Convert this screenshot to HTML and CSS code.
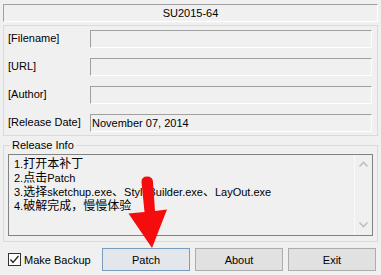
FILE: index.html
```html
<!DOCTYPE html>
<html>
<head>
<meta charset="utf-8">
<link rel="stylesheet" href="styles.css">
</head>
<body>
<div class="app">
  <div class="title">SU2015-64</div>
  <div class="group">
    <div class="row"><span class="lbl">[Filename]</span><div class="edit"></div></div>
    <div class="row"><span class="lbl">[URL]</span><div class="edit"></div></div>
    <div class="row"><span class="lbl">[Author]</span><div class="edit"></div></div>
    <div class="row"><span class="lbl">[Release Date]</span><div class="edit">November 07, 2014</div></div>
  </div>
  <fieldset class="release">
    <legend>Release Info</legend>
    <div class="memo">
      <div class="memo-text">
        <div class="line">1.<span class="cjk">打开本补丁</span></div>
        <div class="line">2.<span class="cjk">点击</span>Patch</div>
        <div class="line">3.<span class="cjk">选择</span>sketchup.exe<span class="cjk">、</span>StyleBuilder.exe<span class="cjk">、</span>LayOut.exe</div>
        <div class="line">4.<span class="cjk">破解完成，慢慢体验</span></div>
      </div>
      <div class="scroll">
        <svg width="17" height="17" viewBox="0 0 17 17"><path d="M4.5 10.5 L8.5 6.5 L12.5 10.5" fill="none" stroke="#bfbfbf" stroke-width="1.6"/></svg>
        <svg width="17" height="17" viewBox="0 0 17 17"><path d="M4.5 6.5 L8.5 10.5 L12.5 6.5" fill="none" stroke="#bfbfbf" stroke-width="1.6"/></svg>
      </div>
    </div>
  </fieldset>
  <div class="bottom">
    <label class="check"><span class="box"><svg width="11" height="11" viewBox="0 0 11 11"><path d="M1.5 5.5 L4 8.5 L9.5 2" fill="none" stroke="#222" stroke-width="1.3"/></svg></span>Make Backup</label>
    <div class="buttons">
      <button class="btn default">Patch</button>
      <button class="btn">About</button>
      <button class="btn">Exit</button>
    </div>
  </div>
  <svg class="arrow" width="381" height="275" viewBox="0 0 381 275">
    <path d="M141.5 182 Q141.5 176.5 147 176.5 Q152.8 176.5 153 182 L155 211 L167 209.5 L152 248 L128.5 213.5 L144.5 212 Z" fill="#f50d0d"/>
  </svg>
</div>
</body>
</html>
```
FILE: styles.css
```css
html, body {
  margin: 0;
  padding: 0;
}
body {
  width: 381px;
  height: 275px;
  overflow: hidden;
  background: #f0f0f0;
  font-family: "Liberation Sans", Arial, sans-serif;
  font-size: 11px;
  color: #000;
}
.app {
  position: relative;
  width: 381px;
  height: 275px;
  padding-top: 4px;
  box-sizing: border-box;
}
.title {
  margin-left: 3px;
  width: 375px;
  height: 18px;
  box-sizing: border-box;
  border-top: 1px solid #a0a0a0;
  border-left: 1px solid #a0a0a0;
  border-bottom: 1px solid #fff;
  border-right: 1px solid #fff;
  text-align: center;
  line-height: 16px;
}
.group {
  margin: 3px 0 0 3px;
  width: 375px;
  box-sizing: border-box;
  border: 1px solid #dadada;
  padding: 4px 5px 3px 4px;
  display: flex;
  flex-direction: column;
  gap: 10px;
}
.row {
  display: flex;
  align-items: center;
  height: 18px;
}
.lbl {
  width: 82px;
  flex: none;
  line-height: 14px;
  margin-top: -2px;
}
.edit {
  flex: 1;
  height: 18px;
  box-sizing: border-box;
  border-top: 1px solid #a0a0a0;
  border-left: 1px solid #a0a0a0;
  border-bottom: 1px solid #fff;
  border-right: 1px solid #fff;
  padding-left: 1px;
  line-height: 16px;
}
.release {
  margin: 3px 0 0 3px;
  width: 375px;
  box-sizing: border-box;
  border: 1px solid #dadada;
  padding: 2px 4px 5px 4px;
  min-width: 0;
}
.release legend {
  margin-left: 2px;
  padding: 0 2px;
  line-height: 13px;
  font-size: 11px;
}
.memo {
  height: 82px;
  box-sizing: border-box;
  border: 1px solid #828282;
  display: flex;
}
.memo-text {
  flex: 1;
  padding: 2px 0 0 5px;
  font-size: 11px;
  white-space: nowrap;
  overflow: hidden;
}
.line {
  height: 14px;
  line-height: 14px;
}
.cjk {
  font-family: "Noto Sans CJK SC", sans-serif;
  font-size: 12px;
  line-height: 12px;
}
.scroll {
  width: 17px;
  flex: none;
  border-left: 1px solid #fafafa;
  display: flex;
  flex-direction: column;
  justify-content: space-between;
  padding: 1px 0 2px;
}
.scroll svg {
  display: block;
}
.bottom {
  margin-top: 6px;
  display: flex;
  align-items: center;
  padding-left: 8px;
}
.check {
  width: 94px;
  flex: none;
  display: flex;
  align-items: center;
  gap: 3px;
  font-size: 11px;
}
.box {
  width: 13px;
  height: 13px;
  box-sizing: border-box;
  border: 1px solid #333;
  background: #fff;
  display: flex;
  align-items: center;
  justify-content: center;
}
.box svg { display: block; }
.buttons {
  display: flex;
  gap: 5px;
}
.btn {
  width: 88px;
  height: 23px;
  box-sizing: border-box;
  margin: 0;
  padding: 0;
  border: 1px solid #adadad;
  background: #e1e1e1;
  font-family: "Liberation Sans", Arial, sans-serif;
  font-size: 11px;
  color: #000;
  border-radius: 0;
}
.btn.default {
  border-color: #7a9dbd;
  background: #e3e7eb;
}
.arrow {
  position: absolute;
  left: 0;
  top: 0;
  pointer-events: none;
}
```
